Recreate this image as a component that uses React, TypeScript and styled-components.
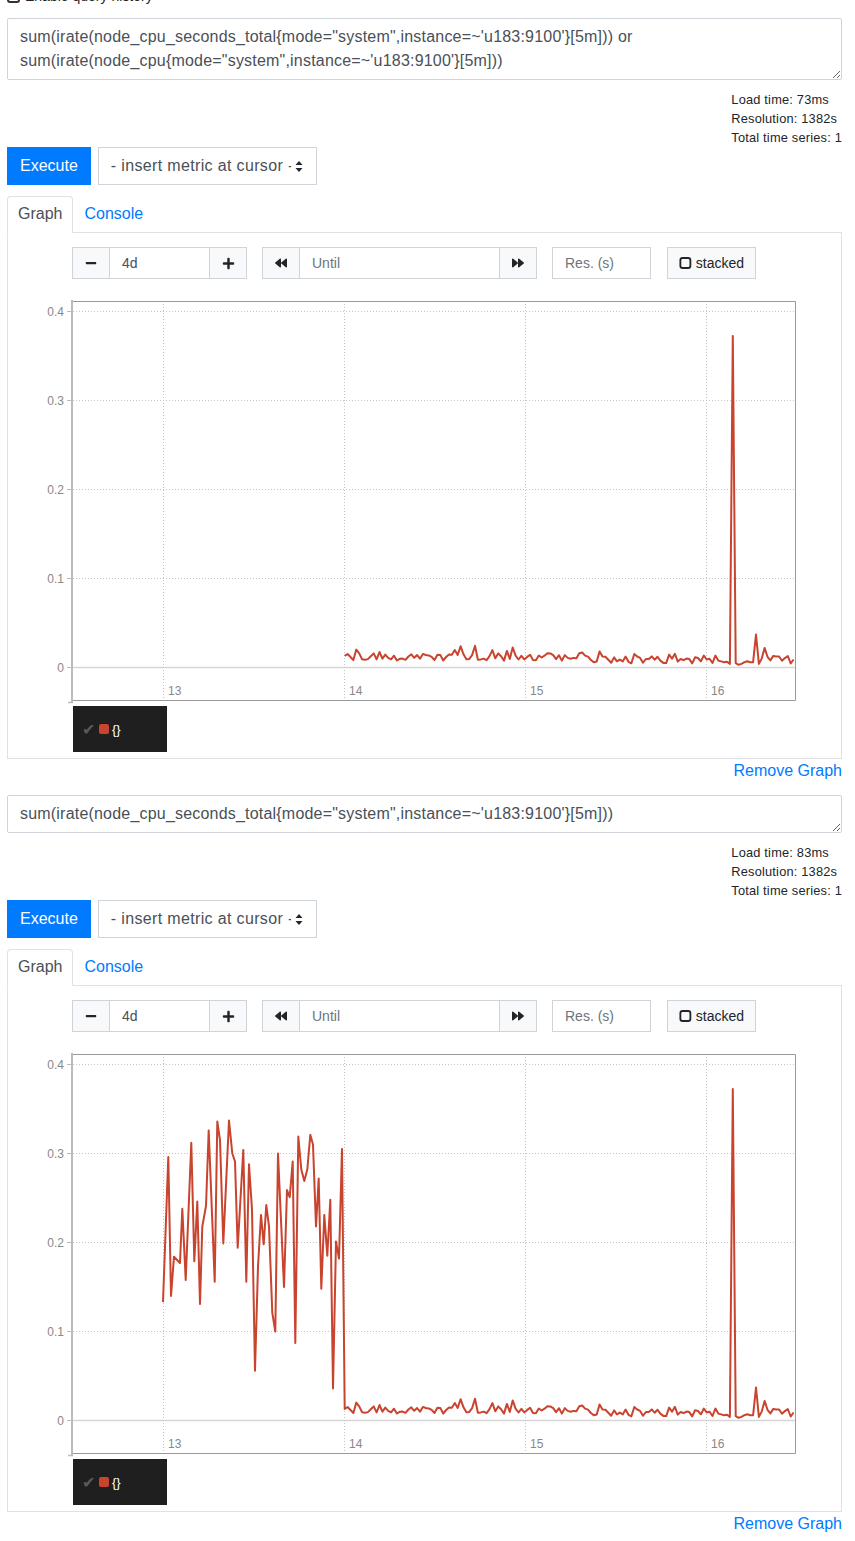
import React from 'react';
import styled, { createGlobalStyle } from 'styled-components';
import { FaMinus, FaPlus, FaBackward, FaForward } from 'react-icons/fa';

const GlobalStyle = createGlobalStyle`
  body {
    margin: 0;
    background: #fff;
    color: #212529;
    font-family: "Liberation Sans", Arial, sans-serif;
  }
`;

const Page = styled.div`
  margin-top: -14px;
  padding: 0 13px 0 7px;
  display: flex;
  flex-direction: column;
  gap: 12px;
`;

const HistoryRow = styled.label`
  display: flex;
  align-items: center;
  height: 20px;
  font-size: 14px;
  color: #212529;
`;

const HistoryBox = styled.span`
  width: 9px;
  height: 9px;
  border: 2px solid #333;
  border-radius: 3px;
  margin-right: 5px;
`;

const Section = styled.section`
  display: flex;
  flex-direction: column;
`;

const ExprArea = styled.textarea<{ $rows: number }>`
  display: block;
  box-sizing: border-box;
  width: 100%;
  height: ${(p) => p.$rows * 24 + 14}px;
  padding: 6px 12px;
  border: 1px solid #ced4da;
  border-radius: 2px;
  font-family: "Liberation Sans", Arial, sans-serif;
  font-size: 16px;
  line-height: 24px;
  letter-spacing: 0.2px;
  color: #495057;
  outline: none;
`;

const Stats = styled.div`
  display: flex;
  justify-content: flex-end;
  margin-top: 10px;
`;

const StatsText = styled.div`
  font-size: 12.8px;
  line-height: 19px;
  letter-spacing: 0.2px;
  color: #212529;
`;

const ButtonRow = styled.div`
  display: flex;
  gap: 7px;
`;

const ExecuteButton = styled.button`
  padding: 6px 12px;
  border: 1px solid #007bff;
  border-radius: 0;
  background: #007bff;
  color: #fff;
  font-family: inherit;
  font-size: 16px;
  line-height: 24px;
`;

const MetricSelect = styled.div`
  box-sizing: border-box;
  width: 219px;
  display: flex;
  align-items: center;
  gap: 4px;
  padding: 6px 13px 6px 12px;
  border: 1px solid #ced4da;
  color: #495057;
  font-size: 16px;
  line-height: 24px;
`;

const SelectText = styled.span`
  flex: 1;
  overflow: hidden;
  white-space: nowrap;
  letter-spacing: 0.35px;
`;

const Tabs = styled.div`
  display: flex;
  margin-top: 11px;
  border-bottom: 1px solid #dee2e6;
`;

const Tab = styled.div<{ $active?: boolean }>`
  padding: 5px 10px 6px;
  margin-bottom: -1px;
  border: 1px solid ${(p) => (p.$active ? '#dee2e6' : 'transparent')};
  border-bottom-color: ${(p) => (p.$active ? '#fff' : 'transparent')};
  border-radius: 4px 4px 0 0;
  background: ${(p) => (p.$active ? '#fff' : 'transparent')};
  color: ${(p) => (p.$active ? '#495057' : '#007bff')};
  font-size: 16px;
  line-height: 24px;
`;

const TabBody = styled.div`
  border: 1px solid #dee2e6;
  border-top: none;
  padding: 14px 0 6px;
`;

const Controls = styled.div`
  display: flex;
  height: 32px;
  margin-left: 64px;
`;

const Group = styled.div<{ $gap?: number }>`
  display: flex;
  margin-left: ${(p) => p.$gap ?? 0}px;
`;

const GroupButton = styled.button`
  box-sizing: border-box;
  width: 38px;
  height: 32px;
  display: flex;
  align-items: center;
  justify-content: center;
  padding: 0;
  border: 1px solid #ced4da;
  border-radius: 0;
  background: #f8f9fa;
  color: #212529;
  & + * {
    margin-left: -1px;
  }
`;

const GroupInput = styled.input<{ $width: number }>`
  box-sizing: border-box;
  width: ${(p) => p.$width}px;
  height: 32px;
  padding: 0 12px;
  border: 1px solid #ced4da;
  border-radius: 0;
  font-family: inherit;
  font-size: 14px;
  color: #495057;
  outline: none;
  & + * {
    margin-left: -1px;
  }
  &::placeholder {
    color: #6c757d;
  }
`;

const StackedButton = styled.button`
  box-sizing: border-box;
  width: 89px;
  height: 32px;
  margin-left: 16px;
  display: flex;
  align-items: center;
  gap: 4px;
  padding: 0 11px;
  border: 1px solid #ced4da;
  border-radius: 0;
  background: #f8f9fa;
  color: #212529;
  font-family: inherit;
  font-size: 14px;
`;

const GraphBox = styled.div`
  margin-top: 21px;
  height: 404px;
`;

const Legend = styled.div`
  margin: 2px 0 0 65px;
  width: 94px;
  height: 46px;
  box-sizing: border-box;
  display: flex;
  align-items: center;
  padding-left: 9px;
  background: #1f1f1f;
  font-size: 13px;
`;

const LegendCheck = styled.span`
  color: #5a5a5a;
  font-size: 16px;
`;

const LegendSwatch = styled.span`
  width: 10px;
  height: 10px;
  margin: 0 3px 0 4px;
  border-radius: 2px;
  background: #c9442f;
`;

const LegendLabel = styled.span`
  color: #fff;
`;

const RemoveRow = styled.div`
  display: flex;
  justify-content: flex-end;
`;

const RemoveLink = styled.a`
  color: #007bff;
  font-size: 16px;
  line-height: 24px;
  text-decoration: none;
`;

const AxisText = styled.text`
  font-family: "Liberation Sans", Arial, sans-serif;
  fill: #888;
`;

// chart geometry (svg coords)
const L = 65;
const R = 787;
const T = 1;
const B = 400;
const yOf = (v: number) => 367.5 - v * 890;
const xOf = (t: number) => 155 + (t - 13) * 181;

type Pt = [number, number];

// high phase, hours since the 13th
const busy: Pt[] = [
  [0, 0.133], [0.7, 0.296], [1.06, 0.14], [1.46, 0.184], [2.25, 0.177], [2.56, 0.238],
  [3.01, 0.158], [3.75, 0.312], [4.15, 0.179], [4.55, 0.246], [4.91, 0.131], [5.21, 0.218],
  [5.7, 0.241], [6.06, 0.326], [6.86, 0.156], [7.2, 0.336], [7.56, 0.315], [8.0, 0.199],
  [8.75, 0.337], [9.19, 0.3], [9.55, 0.291], [9.9, 0.194], [10.65, 0.304], [11.05, 0.156],
  [11.4, 0.288], [11.8, 0.237], [12.2, 0.056], [12.6, 0.173], [12.99, 0.231], [13.35, 0.198],
  [13.7, 0.242], [14.06, 0.218], [14.49, 0.121], [14.89, 0.1], [15.25, 0.3], [16.04, 0.15],
  [16.44, 0.259], [16.8, 0.251], [17.2, 0.291], [17.54, 0.087], [17.94, 0.319], [18.34, 0.282],
  [18.74, 0.269], [19.13, 0.282], [19.53, 0.321], [19.89, 0.31], [20.29, 0.218], [20.65, 0.272],
  [20.99, 0.148], [21.39, 0.231], [21.79, 0.185], [22.18, 0.248], [22.54, 0.036], [22.94, 0.201],
  [23.34, 0.182], [23.73, 0.305],
];

const quiet: Pt[] = (() => {
  let seed = 4211;
  const rnd = () => {
    seed = (seed * 16807) % 2147483647;
    return (seed - 1) / 2147483646;
  };
  const out: Pt[] = [];
  for (let i = 0; i < 156; i++) {
    const t = 14.004 + i * 0.016;
    const base = t < 15.25 ? 0.012 : 0.009;
    let v = base + (rnd() - 0.5) * 0.009;
    if (rnd() > 0.88) v += 0.008;
    out.push([t, v]);
  }
  const fix: Record<number, number> = {
    0: 0.013, 133: 0.004, 134: 0.3725, 135: 0.005, 136: 0.003, 137: 0.004, 138: 0.006,
    139: 0.007, 140: 0.006, 141: 0.006, 142: 0.037, 143: 0.004, 144: 0.01, 145: 0.022,
    146: 0.012, 147: 0.008, 148: 0.013, 155: 0.009,
  };
  Object.entries(fix).forEach(([k, v]) => {
    out[Number(k)][1] = v;
  });
  return out;
})();

const firstSeries = quiet;
const secondSeries: Pt[] = [...busy.map(([h, v]): Pt => [13 + h / 24, v]), ...quiet];

const Chart: React.FC<{ points: Pt[]; id: string }> = ({ points, id }) => {
  const d = points
    .map(([t, v], i) => `${i ? 'L' : 'M'}${xOf(t).toFixed(1)} ${yOf(v).toFixed(1)}`)
    .join(' ');
  const ticks = [0.4, 0.3, 0.2, 0.1, 0];
  const days = [13, 14, 15, 16];
  return (
    <svg width="788" height="404">
      <defs>
        <clipPath id={id}>
          <rect x={L} y={T} width={R - L} height={B - T} />
        </clipPath>
      </defs>
      {ticks.slice(0, 4).map((v) => (
        <line key={v} x1={L} x2={R} y1={yOf(v)} y2={yOf(v)} stroke="#c4c4c4" strokeDasharray="1 2" />
      ))}
      <line x1={L} x2={R} y1={yOf(0)} y2={yOf(0)} stroke="#d6d6d6" strokeWidth="1.5" />
      {days.map((day) => (
        <line key={day} x1={xOf(day) + 0.5} x2={xOf(day) + 0.5} y1={T} y2={B} stroke="#c4c4c4" strokeDasharray="1 2" />
      ))}
      <path d={d} fill="none" stroke="#c9442f" strokeWidth="2" strokeLinejoin="round" clipPath={`url(#${id})`} />
      <polyline points={`${L},${T + 0.5} ${R + 0.5},${T + 0.5} ${R + 0.5},${B + 0.5} ${L},${B + 0.5}`} fill="none" stroke="#9a9a9a" />
      <line x1={L - 1} x2={L - 1} y1={T - 1} y2={B + 3} stroke="#bbb" strokeWidth="2" />
      <line x1={L - 5} x2={L} y1={B + 2.5} y2={B + 2.5} stroke="#bbb" strokeWidth="1.5" />
      {ticks.map((v) => (
        <line key={v} x1={L - 6} x2={L - 1} y1={yOf(v)} y2={yOf(v)} stroke="#bbb" />
      ))}
      {ticks.map((v) => (
        <AxisText key={v} x={L - 9} y={yOf(v) + 4} fontSize="12" textAnchor="end">
          {v === 0 ? '0' : v.toFixed(1)}
        </AxisText>
      ))}
      {days.map((day) => (
        <AxisText key={day} x={xOf(day) + 5} y={395} fontSize="12" fill="#999">
          {day}
        </AxisText>
      ))}
    </svg>
  );
};

const SelectArrows = () => (
  <svg width="8" height="11" viewBox="0 0 8 11">
    <path d="M4 0 L7.5 4 H0.5 Z M4 11 L7.5 7 H0.5 Z" fill="#212529" />
  </svg>
);

const StackIcon = () => (
  <svg width="14" height="14" viewBox="0 0 14 14">
    <rect x="1.5" y="1.5" width="11" height="11" rx="2.5" fill="none" stroke="#212529" strokeWidth="2" />
  </svg>
);

type PanelProps = {
  expr: string;
  rows: number;
  load: number;
  points: Pt[];
  id: string;
};

const QueryPanel: React.FC<PanelProps> = ({ expr, rows, load, points, id }) => (
  <Section>
    <ExprArea $rows={rows} value={expr} readOnly spellCheck={false} />
    <Stats>
      <StatsText>
        Load time: {load}ms
        <br />
        Resolution: 1382s
        <br />
        Total time series: 1
      </StatsText>
    </Stats>
    <ButtonRow>
      <ExecuteButton>Execute</ExecuteButton>
      <MetricSelect>
        <SelectText>- insert metric at cursor -</SelectText>
        <SelectArrows />
      </MetricSelect>
    </ButtonRow>
    <Tabs>
      <Tab $active>Graph</Tab>
      <Tab>Console</Tab>
    </Tabs>
    <TabBody>
      <Controls>
        <Group>
          <GroupButton><FaMinus size={12} /></GroupButton>
          <GroupInput $width={101} defaultValue="4d" readOnly />
          <GroupButton><FaPlus size={13} /></GroupButton>
        </Group>
        <Group $gap={15}>
          <GroupButton><FaBackward size={12} /></GroupButton>
          <GroupInput $width={201} placeholder="Until" readOnly />
          <GroupButton><FaForward size={12} /></GroupButton>
        </Group>
        <Group $gap={15}>
          <GroupInput $width={99} placeholder="Res. (s)" readOnly />
        </Group>
        <StackedButton>
          <StackIcon />
          stacked
        </StackedButton>
      </Controls>
      <GraphBox>
        <Chart points={points} id={id} />
      </GraphBox>
      <Legend>
        <LegendCheck>✔</LegendCheck>
        <LegendSwatch />
        <LegendLabel>{'{}'}</LegendLabel>
      </Legend>
    </TabBody>
    <RemoveRow>
      <RemoveLink href="#">Remove Graph</RemoveLink>
    </RemoveRow>
  </Section>
);

const App: React.FC = () => (
  <>
    <GlobalStyle />
    <Page>
      <HistoryRow>
        <HistoryBox />
        Enable query history
      </HistoryRow>
      <QueryPanel
        id="g1"
        rows={2}
        load={73}
        points={firstSeries}
        expr={`sum(irate(node_cpu_seconds_total{mode="system",instance=~'u183:9100'}[5m])) or\nsum(irate(node_cpu{mode="system",instance=~'u183:9100'}[5m]))`}
      />
      <QueryPanel
        id="g2"
        rows={1}
        load={83}
        points={secondSeries}
        expr={`sum(irate(node_cpu_seconds_total{mode="system",instance=~'u183:9100'}[5m]))`}
      />
    </Page>
  </>
);

export default App;
